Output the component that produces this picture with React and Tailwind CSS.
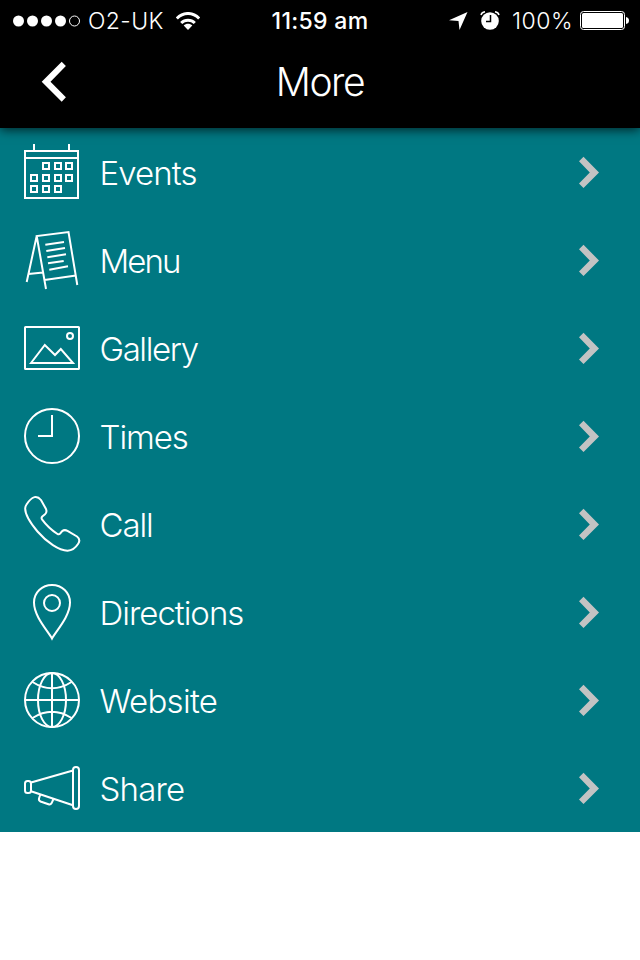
import React from 'react';

const ITEMS = [
  {
    label: 'Events',
    text: 'tracking-[-0.9px]',
    icon: (
      <>
        <rect x="1" y="7" width="53" height="47" />
        <path d="M1 14H54M10 0V7M45 0V7" />
        <path d="M19 19h6v6h-6zM31 19h6v6h-6zM42 19h6v6h-6zM7 31h6v6h-6zM19 31h6v6h-6zM31 31h6v6h-6zM42 31h6v6h-6zM7 42h6v6h-6zM19 42h6v6h-6zM31 42h6v6h-6z" />
      </>
    ),
  },
  {
    label: 'Menu',
    text: 'tracking-[-1.9px]',
    icon: (
      <>
        <path d="M22 57L12.7 4L44.5 0L53.3 53M12.7 4L2.7 50M20.5 48L52 43.5M4.5 42L19 40.5" />
        <path d="M21.3 12.7L40 10M22.3 19L41 16M23.3 25.3L42 22.3M24 31.3L39.7 29M25.3 37.7L44 34.3" />
      </>
    ),
  },
  {
    label: 'Gallery',
    text: 'tracking-[-1.4px]',
    icon: (
      <>
        <rect x="1" y="7" width="54" height="42" rx="0.5" />
        <circle cx="46" cy="16" r="3" />
        <path d="M7 43L20.8 25L31 35L36.8 29L49 43Z" />
      </>
    ),
  },
  {
    label: 'Times',
    text: 'tracking-[-1.1px]',
    icon: (
      <>
        <circle cx="28" cy="28" r="27" />
        <path d="M28 7V28H14" />
      </>
    ),
  },
  {
    label: 'Call',
    text: 'tracking-[-1.1px]',
    icon: (
      <path d="M2.5 8.5C5 4.5 7.5 2 10.5 1.1C13 .5 15 1.5 17 4L22 13C23 15.5 22.5 17 21 18.3L18.3 20.5C17.3 21.5 17.5 22.5 18 23.3C22.5 29.5 27.5 34 33.5 38C34.5 38.6 35.5 38.3 36.3 37.3L38 35.3C39.5 34 41.5 33.8 43.5 34.8L53 40.5C55.5 42.5 55.8 45.5 54 48C51.5 52 47.5 54.5 43.5 54.8C35 54.5 23 46.5 13.5 35.5C6 26.5 1 17 1.2 12.3C1.3 10.8 1.7 9.7 2.5 8.5Z" />
    ),
  },
  {
    label: 'Directions',
    text: 'tracking-[-1px]',
    icon: (
      <>
        <path d="M28 54.5C24 47 10 32.5 10 18.5C10 8.5 18 1 28 1S46 8.5 46 18.5C46 32.5 32 47 28 54.5Z" />
        <circle cx="28" cy="19" r="8" />
      </>
    ),
  },
  {
    label: 'Website',
    text: 'tracking-[-0.7px]',
    icon: (
      <>
        <circle cx="28" cy="28" r="27" />
        <ellipse cx="28" cy="28" rx="14" ry="27" />
        <path d="M28 1V55M1 28H55M8.5 10Q28 22.5 47.5 10M8.5 46Q28 33.5 47.5 46" />
      </>
    ),
  },
  {
    label: 'Share',
    text: 'tracking-[-0.8px]',
    icon: (
      <>
        <rect x="49" y="7" width="6" height="42" rx="3" />
        <rect x="1" y="21" width="6" height="12" rx="2.5" />
        <path d="M7 22.5L49 10.5M7 31.3L49 45.3M16.3 34.5L15 38.5Q14.5 40.5 16.5 41.5L24.5 44.3Q26.5 45 27.5 43.3L29.5 39" />
      </>
    ),
  },
];

function StatusBar() {
  return (
    <div className="grid h-10 grid-cols-3 items-center text-[23px] leading-10">
      <div className="flex items-center pl-[13px]">
        <svg width="68" height="12" viewBox="0 0 68 12" fill="white">
          <circle cx="5.5" cy="6" r="5.5" />
          <circle cx="19.5" cy="6" r="5.5" />
          <circle cx="33.5" cy="6" r="5.5" />
          <circle cx="47.5" cy="6" r="5.5" />
          <circle cx="61.5" cy="6" r="5" fill="none" stroke="white" />
        </svg>
        <span className="ml-[7px] w-[88px] pt-px whitespace-nowrap font-light tracking-[0.4px]">O2-UK</span>
        <svg width="24" height="18" viewBox="0 0 24 18" fill="none" stroke="white" strokeWidth="3">
          <path d="M.8 6.5C7-.2 17-.2 23.2 6.5M5.2 11C9 7.2 15 7.2 18.8 11" />
          <path d="M7.7 13.5C10 11 14 11 16.3 13.5L12 18Z" fill="white" stroke="none" />
        </svg>
      </div>
      <div className="pt-px text-center font-medium tracking-[0.3px] whitespace-nowrap">11:59 am</div>
      <div className="flex items-center justify-end pr-[11px]">
        <svg width="19" height="18" viewBox="0 0 19 18" fill="white">
          <path d="M18.5 0L10.5 18L9.5 9L0 8.2Z" />
        </svg>
        <svg className="ml-3" width="20" height="19" viewBox="0 0 20 19">
          <circle cx="10" cy="10" r="8.8" fill="white" />
          <path d="M1 4Q1.5 1.5 5 .8M15 .8Q18.5 1.5 19 4" fill="none" stroke="white" strokeWidth="1.5" />
          <path d="M10.5 4V10.5H6" fill="none" stroke="black" strokeWidth="1.5" />
        </svg>
        <span className="ml-3 w-[60px] pt-px whitespace-nowrap font-light tracking-[0.5px]">100%</span>
        <svg className="ml-2" width="49" height="19" viewBox="0 0 49 19">
          <rect x=".5" y=".5" width="44" height="18" rx="3" fill="none" stroke="white" />
          <rect x="2" y="2" width="41" height="15" rx="1.5" fill="white" />
          <path d="M46 6Q49 6.5 49 9.5T46 13Z" fill="white" />
        </svg>
      </div>
    </div>
  );
}

function MenuRow({ item }) {
  return (
    <li className="flex h-22 items-center pr-10 pl-6">
      <svg
        className="shrink-0 overflow-visible"
        width="56"
        height="56"
        viewBox="0 0 56 56"
        fill="none"
        stroke="white"
        strokeWidth="2"
      >
        {item.icon}
      </svg>
      <div className="ml-[19.5px] flex-1 pt-0.5 text-[33px] leading-10 font-[270]">
        <span className={item.text}>{item.label}</span>
      </div>
      <svg width="22" height="32" viewBox="0 0 22 32" fill="#c3c3c3">
        <path d="M5.5 .8L21 16.5L5.5 32L1 27.5L11.8 16.5L1 5.3Z" />
      </svg>
    </li>
  );
}

export default function App() {
  return (
    <div className="h-[960px] w-[640px] overflow-hidden bg-white font-['Inter','Liberation_Sans',sans-serif] text-white">
      <header className="relative h-32 bg-black shadow-[0_2px_10px_rgba(0,0,0,0.7)]">
        <StatusBar />
        <div className="grid h-[84px] grid-cols-3 items-center">
          <svg className="ml-[41px]" width="26" height="42" viewBox="0 0 26 42" fill="white">
            <path d="M20.7 .8L24.9 5L9.5 20.7L24.9 36.3L20.7 40.7L.7 20.7Z" />
          </svg>
          <h1 className="pt-px text-center text-[39px] font-[270] tracking-[-1.4px]">More</h1>
        </div>
      </header>
      <ul className="bg-[#007882]">
        {ITEMS.map((item) => (
          <MenuRow key={item.label} item={item} />
        ))}
      </ul>
    </div>
  );
}
